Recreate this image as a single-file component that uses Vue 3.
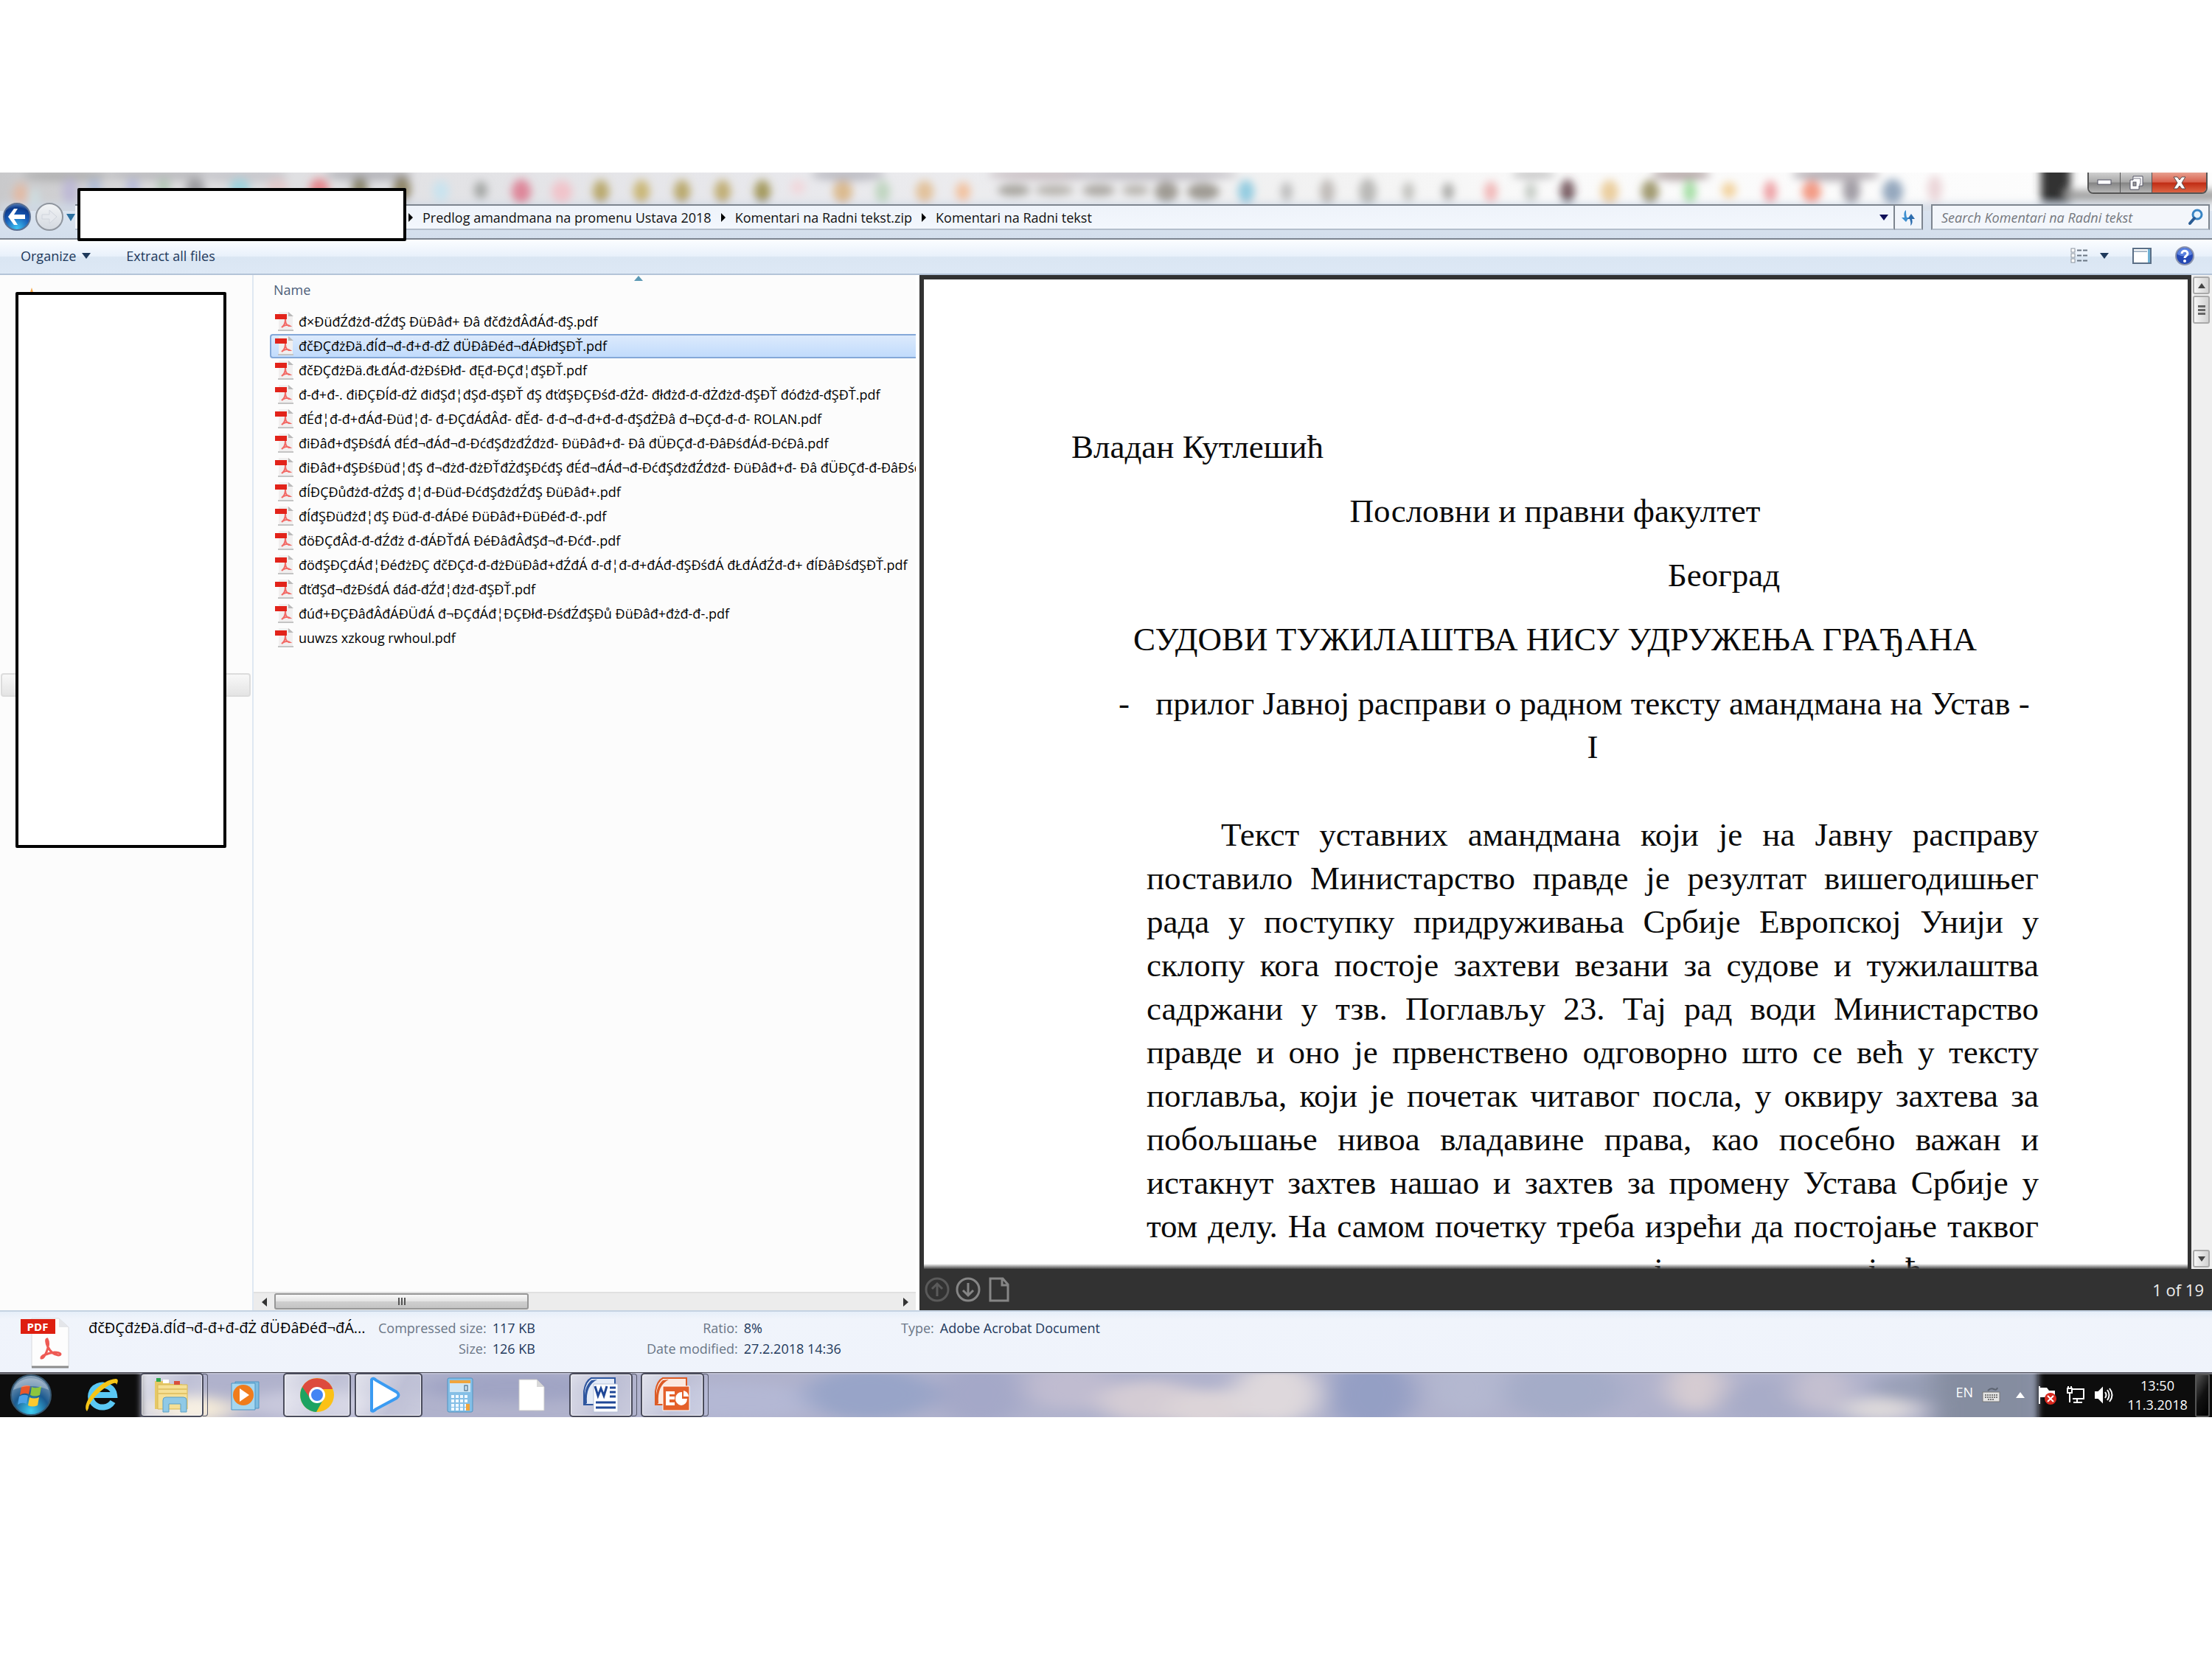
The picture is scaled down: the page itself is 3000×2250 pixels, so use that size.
<script setup>
const crumbs = [
  'Predlog amandmana na promenu Ustava 2018',
  'Komentari na Radni tekst.zip',
  'Komentari na Radni tekst',
]

const files = [
  'đ×ĐüđŹđżđ-đŹđŞ ĐüĐâđ+ Đâ đčđżđÂđÁđ-đŞ.pdf',
  'đčĐÇđżĐä.đÍđ¬đ-đ+đ-đŻ đÜĐâĐéđ¬đÁĐłđŞĐŤ.pdf',
  'đčĐÇđżĐä.đŁđÁđ-đżĐśĐłđ- đĘđ-ĐÇđ¦đŞĐŤ.pdf',
  'đ-đ+đ-. điĐÇĐÍđ-đŻ điđŞđ¦đŞđ-đŞĐŤ đŞ đťđŞĐÇĐśđ-đŻđ- đłđżđ-đ-đŻđżđ-đŞĐŤ đóđżđ-đŞĐŤ.pdf',
  'đÉđ¦đ-đ+đÁđ-Đüđ¦đ- đ-ĐÇđÁđÂđ- đĚđ- đ-đ¬đ-đ+đ-đ-đŞđŻĐâ đ¬ĐÇđ-đ-đ- ROLAN.pdf',
  'điĐâđ+đŞĐśđÁ đÉđ¬đÁđ¬đ-ĐćđŞđżđŹđżđ- ĐüĐâđ+đ- Đâ đÜĐÇđ-đ-ĐâĐśđÁđ-ĐćĐâ.pdf',
  'điĐâđ+đŞĐśĐüđ¦đŞ đ¬đżđ-đżĐŤđŻđŞĐćđŞ đÉđ¬đÁđ¬đ-ĐćđŞđżđŹđżđ- ĐüĐâđ+đ- Đâ đÜĐÇđ-đ-ĐâĐśđÁđ-ĐćĐâ.pdf',
  'đÍĐÇĐůđżđ-đŻđŞ đ¦đ-Đüđ-ĐćđŞđżđŹđŞ ĐüĐâđ+.pdf',
  'đÍđŞĐüđżđ¦đŞ Đüđ-đ-đÁĐé ĐüĐâđ+ĐüĐéđ-đ-.pdf',
  'đöĐÇđÂđ-đ-đŹđż đ-đÁĐŤđÁ ĐéĐâđÂđŞđ¬đ-Đćđ-.pdf',
  'đöđŞĐÇđÁđ¦ĐéđżĐÇ đčĐÇđ-đ-đżĐüĐâđ+đŹđÁ đ-đ¦đ-đ+đÁđ-đŞĐśđÁ đŁđÁđŹđ-đ+ đÍĐâĐśđŞĐŤ.pdf',
  'đťđŞđ¬đżĐśđÁ đáđ-đŹđ¦đżđ-đŞĐŤ.pdf',
  'đúđ+ĐÇĐâđÂđÁĐÜđÁ đ¬ĐÇđÁđ¦ĐÇĐłđ-ĐśđŹđŞĐů ĐüĐâđ+đżđ-đ-.pdf',
  'uuwzs xzkoug rwhoul.pdf',
]
const selected = 1

const docLines = [
  'Текст уставних амандмана који је на Јавну расправу',
  'поставило Министарство правде је резултат вишегодишњег',
  'рада у поступку придруживања Србије Европској Унији у',
  'склопу кога постоје захтеви везани за судове и тужилаштва',
  'садржани у тзв. Поглављу 23. Тај рад води Министарство',
  'правде и оно је првенствено одговорно што се већ у тексту',
  'поглавља, који је почетак читавог посла, у оквиру захтева за',
  'побољшање нивоа владавине права, као посебно важан и',
  'истакнут захтев нашао и захтев за промену Устава Србије у',
  'том делу. На самом почетку треба изрећи да постојање таквог',
]

// Shapes of the window behind, seen through the glass title bar: x, y, rx, ry, colour
const glass = [
  [90, 4, 60, 8, '#aaa'], [230, 3, 90, 8, '#b4b4b8'], [330, 4, 60, 10, '#c4c4c8'], [500, 3, 60, 8, '#a9a9b0'],
  [28, 30, 10, 16, '#e8b79c'], [46, 34, 9, 12, '#cfe0e4'], [95, 26, 11, 18, '#b9b4d6'], [128, 20, 9, 12, '#a8b8d8'],
  [180, 20, 9, 12, '#b0b4da'], [222, 20, 9, 12, '#a9c2ae'], [265, 22, 13, 14, '#8c8c90'], [325, 20, 14, 12, '#8fd0dc'],
  [376, 20, 14, 12, '#e4c6c6'], [433, 22, 13, 14, '#e87078'], [488, 20, 11, 14, '#77704f'], [545, 22, 12, 18, '#7c704a'],
  [598, 25, 11, 14, '#c4e4f2'], [652, 24, 9, 12, '#949894'], [707, 26, 13, 17, '#dd7088'], [762, 26, 14, 15, '#f4bcc4'],
  [815, 26, 11, 16, '#b09a50'], [870, 26, 11, 16, '#c4ac5c'], [925, 26, 11, 16, '#b09a50'], [980, 26, 11, 16, '#b8a058'],
  [1034, 26, 11, 16, '#94883c'], [1082, 20, 10, 10, '#f4d4d8'], [1143, 26, 13, 16, '#d8b078'], [1197, 26, 10, 15, '#b4d0b4'],
  [1254, 26, 12, 15, '#e0b888'], [1306, 26, 10, 13, '#f4b88c'], [1150, 3, 50, 9, '#b4b4bc'], [1420, 3, 80, 8, '#c4b8bc'],
  [1560, 3, 120, 8, '#b8b4bc'], [1690, 26, 11, 16, '#7cc4dc'], [1745, 26, 8, 13, '#b0b0b0'], [1800, 26, 10, 17, '#b4b0ac'],
  [1855, 26, 12, 18, '#acaaa8'], [1910, 26, 8, 13, '#b4b4b0'], [1964, 26, 8, 12, '#989894'], [2022, 26, 9, 14, '#f0a8a8'],
  [2076, 26, 8, 12, '#b8c0b8'], [2126, 26, 10, 17, '#5c3840'], [2183, 26, 12, 16, '#e8c488'], [2238, 26, 12, 16, '#8c8450'],
  [2292, 26, 9, 15, '#90d890'], [2345, 24, 10, 11, '#f0c888'], [2401, 26, 9, 15, '#ec8c90'], [2457, 26, 13, 15, '#f08468'],
  [2511, 24, 12, 18, '#8c8890'], [2567, 26, 14, 17, '#7c94b0'], [2624, 22, 10, 18, '#e8ccd0'], [2280, 3, 40, 8, '#a89898'],
  [2490, 3, 60, 9, '#a8a0a8'], [2080, 3, 30, 6, '#b8b8b8'],
  [1375, 24, 22, 8, '#98948c'], [1430, 24, 26, 7, '#a8a49c'], [1490, 24, 22, 8, '#9c9890'], [1540, 24, 18, 7, '#a8a49c'],
  [1582, 26, 16, 14, '#8c887e'], [1632, 26, 22, 12, '#8c887e'],
]

// Wallpaper clouds behind the taskbar glass
const clouds = [
  [260, 50, 60, 18, '#f4ead8'], [420, 44, 90, 20, '#c8c8dc'], [700, 20, 130, 20, '#a0a4c4'], [1000, 40, 120, 24, '#b4b8d4'],
  [1180, 30, 90, 34, '#98a4c8'], [1330, 30, 60, 40, '#a4a8c8'], [1450, 20, 60, 30, '#c0bcd0'], [1560, 40, 70, 28, '#d4ccd4'],
  [1640, 50, 60, 26, '#dcd4d8'], [1730, 30, 60, 40, '#ded8dc'], [1860, 30, 60, 46, '#949fc4'], [1990, 20, 50, 40, '#b4b8d0'],
  [2120, 26, 80, 38, '#a4acc8'], [2300, 20, 40, 34, '#d6ccd2'], [2400, 40, 70, 30, '#a8acc8'], [2470, 24, 40, 30, '#c4c0d0'],
  [2550, 50, 50, 16, '#dcd8da'], [2600, 20, 60, 20, '#9aa0b8'],
]
</script>

<template>
  <div class="screen">
    <header class="chrome">
      <div class="titlebar">
        <svg class="glass" viewBox="0 0 3000 52" preserveAspectRatio="none" aria-hidden="true">
          <defs>
            <filter id="soft" x="-50%" y="-50%" width="200%" height="200%"><feGaussianBlur stdDeviation="6" /></filter>
            <linearGradient id="glassBase" x1="0" x2="1" y1="0" y2="0">
              <stop offset="0" stop-color="#c9c9cb" /><stop offset=".08" stop-color="#dedee0" />
              <stop offset=".35" stop-color="#e8e8ec" /><stop offset=".6" stop-color="#f2f2f2" />
              <stop offset=".7" stop-color="#fafafa" /><stop offset="1" stop-color="#fdfdfd" />
            </linearGradient>
          </defs>
          <rect width="3000" height="52" fill="url(#glassBase)" />
          <g filter="url(#soft)">
            <g opacity=".8"><ellipse v-for="(b, i) in glass" :key="i" :cx="b[0]" :cy="b[1]" :rx="b[2]" :ry="b[3]" :fill="b[4]" /></g>
            <rect x="2768" y="-20" width="40" height="62" fill="#333" />
            <rect x="2800" y="24" width="220" height="14" fill="#999" />
            <rect x="0" y="42" width="3000" height="14" fill="#cfd8e4" />
          </g>
        </svg>
        <div class="winbtns">
          <button class="wb" aria-label="Minimize"><svg width="20" height="10"><rect x="1" y="1" width="18" height="6" fill="#fff" stroke="#556" /></svg></button>
          <button class="wb" aria-label="Restore"><svg width="20" height="20"><path d="M6 1h13v13h-5v5H2V6h4z" fill="#fff" stroke="#556" /><rect x="6" y="9" width="4" height="5" fill="#999" stroke="#556" /><path d="M7 4h9v8h-2" fill="none" stroke="#778" /></svg></button>
          <button class="wb close" aria-label="Close"><svg width="20" height="18"><path d="M2 1h5l3 4 3-4h5l-5 8 5 8h-5l-3-4-3 4H2l5-8z" fill="#fff" stroke="#5a4a4a" /></svg></button>
        </div>
      </div>
      <div class="navbar">
        <button class="round back" aria-label="Back"><svg width="26" height="26"><path d="M14 2l-5 8h15v6H9l5 8h-5L1 13 9 2z" fill="#fff" /></svg></button>
        <button class="round fwd" aria-label="Forward"><svg width="24" height="24"><path d="M12 3v6H2v6h10v6l10-9z" fill="#e6e9ee" stroke="#cfd4dc" /></svg></button>
        <svg width="12" height="10" class="recent"><path d="M0 0h12L6 10z" fill="#2b6f9f" /></svg>
        <nav class="address" aria-label="Address">
          <template v-for="c in crumbs" :key="c">
            <svg width="8" height="12"><path d="M1 0l6 6-6 6z" fill="#000" /></svg>
            <a href="#">{{ c }}</a>
          </template>
          <svg class="dropdown" width="12" height="8"><path d="M0 0h12L6 8z" fill="#10105a" /></svg>
        </nav>
        <button class="refresh" aria-label="Refresh"><svg width="24" height="24"><path d="M9 2C6 4 6 8 7 12H3l6 6 4-6h-3C9 8 9 5 9 2z" fill="#3d8fd0" /><path d="M15 23c3-2 3-6 2-9h4l-5-7-5 7h3c1 3 2 6 1 9z" fill="#2c6cae" /></svg></button>
        <label class="search">
          <input type="search" placeholder="Search Komentari na Radni tekst" aria-label="Search Komentari na Radni tekst" />
          <svg width="22" height="24"><circle cx="13" cy="8" r="6" fill="#e8f4fc" stroke="#3784c4" stroke-width="3" /><path d="M9 13L3 20" stroke="#2a5c94" stroke-width="4" stroke-linecap="round" /></svg>
        </label>
        <div class="mask mask-top"></div>
      </div>
    </header>

    <div class="toolbar">
      <button>Organize <svg width="12" height="8"><path d="M0 0h12L6 8z" fill="#1e395b" /></svg></button>
      <button>Extract all files</button>
      <div class="tools">
        <button aria-label="Change view"><svg width="24" height="24"><g fill="#fff" stroke="#8a929c"><rect x="1" y="2" width="5" height="5" /><rect x="1" y="9" width="5" height="5" /><rect x="1" y="16" width="5" height="5" /></g><path d="M9 4.500h6M17 4.500h6M9 11.500h6M17 11.500h6M9 18.500h6M17 18.500h6" stroke="#6b7683" stroke-width="2" /></svg></button>
        <button aria-label="View options" class="opt"><svg width="12" height="8"><path d="M0 0h12L6 8z" fill="#1e395b" /></svg></button>
        <button aria-label="Preview pane" class="pane"><svg width="26" height="22"><rect x="1" y="1" width="24" height="20" fill="#fff" stroke="#5b6f86" stroke-width="2" /><path d="M2 5h18" stroke="#a9b9c9" stroke-width="2" /><rect x="21" y="2" width="3" height="18" fill="#6fb1d4" /></svg></button>
        <button aria-label="Help"><svg width="26" height="26"><circle cx="13" cy="13" r="12" fill="#2448b4" stroke="#8a93ac" stroke-width="2" /><path d="M3 11a10 9 0 0 1 20 0q-10 5-20 0z" fill="#5b82e0" /><path d="M9 10c0-5 8-5 8 0 0 3-4 3-4 6" fill="none" stroke="#fff" stroke-width="3" /><circle cx="13" cy="20" r="2" fill="#fff" /></svg></button>
      </div>
    </div>

    <main class="body">
      <aside class="tree">
        <svg class="star" width="10" height="16"><path d="M5 0l5 16H0z" fill="#f7a94a" /></svg>
        <div class="tree-row"></div>
        <div class="mask mask-side"></div>
      </aside>

      <section class="list">
        <svg class="sort" width="12" height="7"><path d="M6 0l6 7H0z" fill="#5d9ab5" /></svg>
        <table>
          <thead><tr><th>Name</th></tr></thead>
          <tbody>
            <tr v-for="(f, i) in files" :key="f" :class="{ sel: i === selected }">
              <td>
                <div class="cell">
                  <svg width="26" height="26" aria-hidden="true"><path d="M5 0h13l6 6v18H5z" fill="#f1efef" /><path d="M18 0l7 6h-7z" fill="#b9b9b9" /><path d="M4 25h21" stroke="#c4c4c4" stroke-width="2" /><path d="M0 3h16v7H0z" fill="#e2231a" /><path d="M14 10c0 5-2 9-5 11 3-3 8-4 11-2-4 0-6-4-6-9z" fill="none" stroke="#f26a66" stroke-width="2" /></svg>
                  <span>{{ f }}</span>
                </div>
              </td>
            </tr>
          </tbody>
        </table>
        <div class="hscroll">
          <button aria-label="Scroll left"><svg width="7" height="12"><path d="M7 0v12L0 6z" fill="#333" /></svg></button>
          <div class="htrack"><div class="hthumb"><i></i><i></i><i></i></div></div>
          <button aria-label="Scroll right"><svg width="7" height="12"><path d="M0 0v12l7-6z" fill="#333" /></svg></button>
        </div>
      </section>

      <section class="preview">
        <div class="view">
          <article class="page">
            <p class="author">Владан Кутлешић</p>
            <p class="center">Пословни и правни факултет</p>
            <p class="city">Београд</p>
            <p class="center">СУДОВИ ТУЖИЛАШТВА НИСУ УДРУЖЕЊА ГРАЂАНА</p>
            <div class="inset">
              <p class="sub"><span class="dash">-</span>прилог Јавној расправи о радном тексту амандмана на Устав -</p>
              <p class="num">I</p>
              <p class="para">
                <span v-for="l in docLines" :key="l">{{ l }}</span>
                <span class="cut"><b>ј</b><b>ј</b><b>ђ</b></span>
              </p>
            </div>
          </article>
          <div class="vscroll">
            <button aria-label="Scroll up"><svg width="10" height="7"><path d="M5 0l5 7H0z" fill="#444" /></svg></button>
            <div class="vthumb"><i></i><i></i><i></i></div>
            <button class="down" aria-label="Scroll down"><svg width="10" height="7"><path d="M0 0h10L5 7z" fill="#444" /></svg></button>
          </div>
        </div>
        <footer class="pager">
          <button aria-label="Previous page"><svg width="34" height="34" fill="none" stroke="#5a5a5a" stroke-width="3"><circle cx="17" cy="17" r="15" /><path d="M17 26V9M10 16l7-7 7 7" /></svg></button>
          <button aria-label="Next page"><svg width="34" height="34" fill="none" stroke="#868686" stroke-width="3"><circle cx="17" cy="17" r="15" /><path d="M17 8v17M10 18l7 7 7-7" /></svg></button>
          <button aria-label="Page view"><svg width="34" height="34" fill="none" stroke="#868686" stroke-width="3"><path d="M5 2h17l7 8v22H5zM21 2v9h8" /></svg></button>
          <span>1 of 19</span>
        </footer>
      </section>
    </main>

    <section class="details">
      <svg width="66" height="70" viewBox="0 0 66 70" aria-hidden="true">
        <path d="M15 1h37l13 12v54H15z" fill="#fdfdfd" stroke="#d8dade" /><path d="M52 1v12h13z" fill="#e4e6ea" /><path d="M15 67h50" stroke="#8c8c8c" stroke-width="3" />
        <rect y="2" width="47" height="20" fill="#de1f10" />
        <text x="23" y="18" text-anchor="middle" font-family="Open Sans, sans-serif" font-size="15" font-weight="700" fill="#fff">PDF</text>
        <path d="M36 29c-4 0 1 20 15 22 5 0 4-4-5-4-9 1-19 5-18 8 4 1 13-17 8-26z" fill="none" stroke="#ee5a54" stroke-width="3" />
      </svg>
      <strong>đčĐÇđżĐä.đÍđ¬đ-đ+đ-đŻ đÜĐâĐéđ¬đÁ...</strong>
      <dl class="d1"><dt>Compressed size:</dt><dd>117 KB</dd><dt>Size:</dt><dd>126 KB</dd></dl>
      <dl class="d2"><dt>Ratio:</dt><dd>8%</dd><dt>Date modified:</dt><dd>27.2.2018 14:36</dd></dl>
      <dl class="d3"><dt>Type:</dt><dd>Adobe Acrobat Document</dd></dl>
    </section>

    <footer class="taskbar">
      <svg class="wall" viewBox="0 0 3000 61" preserveAspectRatio="none" aria-hidden="true">
        <defs><filter id="cloud" x="-50%" y="-100%" width="200%" height="300%"><feGaussianBlur stdDeviation="18 8" /></filter>
          <filter id="edge" x="-10%" y="-10%" width="120%" height="120%"><feGaussianBlur stdDeviation="4 0" /></filter></defs>
        <rect width="3000" height="61" fill="#b0b2cc" />
        <g filter="url(#cloud)">
          <ellipse v-for="(b, i) in clouds" :key="i" :cx="b[0]" :cy="b[1]" :rx="b[2]" :ry="b[3]" :fill="b[4]" />
          <rect x="2620" y="-20" width="160" height="110" fill="#858da0" />
        </g>
        <g filter="url(#edge)"><rect x="-20" y="-9" width="212" height="80" fill="#0b0b0b" /><rect x="2764" y="-9" width="260" height="80" fill="#090909" /></g>
        <path d="M0 2h3000" stroke="#c9cad6" stroke-width="1" /><path d="M0 0h3000" stroke="#50505a" stroke-width="2" />
      </svg>
      <button class="task start" aria-label="Start">
        <svg width="60" height="58" viewBox="0 0 60 58"><defs><radialGradient id="orb" cx=".5" cy=".9" r=".9"><stop offset="0" stop-color="#3fd0f4" /><stop offset=".5" stop-color="#1b5a90" /><stop offset="1" stop-color="#8fa4b8" /></radialGradient></defs>
          <circle cx="30" cy="29" r="27" fill="url(#orb)" stroke="#36566f" stroke-width="2" />
          <path d="M17 18q6-4 12-1l-2 11q-6-3-12 1z" fill="#e8562a" /><path d="M31 18q6 3 13-1l-2 12q-7 3-13 0z" fill="#8cc63e" /><path d="M14 31q6-4 12-1l-2 11q-6-3-12 1z" fill="#4aa0e6" /><path d="M28 32q6 3 13 0l-2 11q-7 3-13 0z" fill="#fcc92f" />
          <path d="M6 22a25 22 0 0 1 48 0q-24-10-48 0z" fill="#fff" opacity=".3" /></svg>
      </button>
      <button class="task ie" aria-label="Internet Explorer">
        <svg width="50" height="50" viewBox="0 0 50 50"><path d="M40 34a16 15 0 1 1 2-9H14" fill="none" stroke="#5ac8f4" stroke-width="8" /><path d="M5 47C-4 38 22 4 44 3c3 0 4 3 1 8 0-10-36 16-38 32z" fill="#f5c518" /></svg>
      </button>
      <button class="task box stack" aria-label="Windows Explorer">
        <svg width="54" height="50" viewBox="0 0 54 50"><path d="M4 6h18l3 4h16v34H4z" fill="#e6c866" /><path d="M8 11h40v33H8z" fill="#f5e096" stroke="#d8b850" /><path d="M8 17h40M8 23h40" stroke="#e2c468" stroke-width="2" /><path d="M6 2h6v5H6z" fill="#2fa84f" /><path d="M15 4h8v5h-8z" fill="#fff" /><path d="M30 6h8v5h-8z" fill="#d9503c" /><path d="M15 48V32q0-4 4-4h24q4 0 4 4v16h-8V37H23v11z" fill="#8fc9e6" stroke="#5d9fc4" /></svg>
      </button>
      <button class="task" aria-label="Media Player">
        <svg width="44" height="44" viewBox="0 0 44 44"><path d="M8 4h32v36H8z" fill="#7fbde0" stroke="#4c94c4" /><path d="M3 6h32v36H3z" fill="#a5d6ef" stroke="#4c94c4" /><circle cx="19" cy="22" r="14" fill="#f07c1c" /><path d="M14 13l13 9-13 9z" fill="#fff" /></svg>
      </button>
      <button class="task box" aria-label="Chrome">
        <svg width="48" height="48" viewBox="0 0 48 48"><circle cx="24" cy="24" r="23" fill="#fbc116" /><path d="M4 13a23 23 0 0 1 40 0l1 3H24l-10 14z" fill="#dd4b3e" /><path d="M4 13a23 23 0 0 0 19 34l10-18-9 4-9-4z" fill="#1da362" /><circle cx="24" cy="24" r="11" fill="#fff" /><circle cx="24" cy="24" r="8" fill="#4285f4" /></svg>
      </button>
      <button class="task box play" aria-label="Player">
        <svg width="44" height="50" viewBox="0 0 44 50"><path d="M4 4v42q2 2 6-2l28-15q5-4 0-8L10 5Q6 1 4 4z" fill="#fff" stroke="#3a9bf2" stroke-width="4" /></svg>
      </button>
      <button class="task" aria-label="Calculator">
        <svg width="36" height="48" viewBox="0 0 36 48"><rect x="1" y="1" width="34" height="46" rx="2" fill="#85bfe6" stroke="#4f93c2" /><rect x="4" y="4" width="28" height="16" fill="#cfe6f5" /><path d="M4 4h28v4H4z" fill="#f0a53c" /><path d="M6 26h24M6 32h24M6 38h24M6 43h24" stroke="#eff8ff" stroke-width="4" stroke-dasharray="4 2" /><rect x="26" y="36" width="5" height="9" fill="#f0a53c" /><rect x="24" y="11" width="4" height="7" fill="none" stroke="#355a78" /></svg>
      </button>
      <button class="task" aria-label="Document">
        <svg width="36" height="44" viewBox="0 0 36 44"><path d="M1 1h24l10 10v32H1z" fill="#fff" stroke="#c8c8c8" /><path d="M25 1v10h10z" fill="#d8d8d8" /></svg>
      </button>
      <button class="task box stack" aria-label="Word">
        <svg width="50" height="50" viewBox="0 0 50 50"><path d="M12 2h32v36H2V20Q4 6 12 2z" fill="#e4ebf7" stroke="#2e569f" stroke-width="2" /><path d="M6 36Q4 12 20 4l-8 1Q1 14 3 38z" fill="#2e569f" /><path d="M15 10h33v38H15z" fill="#fff" stroke="#b4c0d8" /><path d="M17 13l4 13 4-10 4 10 4-13" fill="none" stroke="#1f4797" stroke-width="3" /><path d="M37 15h8M37 21h8M37 27h8M18 35h27M18 42h27" stroke="#1f4797" stroke-width="3" /></svg>
      </button>
      <button class="task box stack" aria-label="PowerPoint">
        <svg width="50" height="50" viewBox="0 0 50 50"><path d="M12 2h32v36H2V20Q4 6 12 2z" fill="#fbe9e0" stroke="#dc5b26" stroke-width="2" /><path d="M6 36Q4 12 20 4l-8 1Q1 14 3 38z" fill="#dc5b26" /><path d="M12 13h36v33H12z" fill="#e4602a" stroke="#fff" /><path d="M16 20h12v4h-7v3h7v4h-7v4h7v4H16z" fill="#fff" /><path d="M38 21a8 9 0 1 0 7 9h-7z" fill="#fff" /><path d="M40 19v8h7q-1-7-7-8z" fill="#fff" /></svg>
      </button>
      <div class="tray">
        <button class="lang">EN</button>
        <svg width="26" height="22"><path d="M8 5q4-4 8-2t5-2" fill="none" stroke="#5c6370" stroke-width="2" /><rect x="1" y="7" width="23" height="13" fill="#e4e4e4" stroke="#777" /><path d="M4 11h18M4 14h18M8 17h9" stroke="#777" stroke-width="2" stroke-dasharray="2 1" /></svg>
        <svg class="up" width="12" height="8"><path d="M6 0l6 8H0z" fill="#fff" /></svg>
        <svg width="26" height="26"><path d="M2 1v24" stroke="#fff" stroke-width="2" /><path d="M3 3h9l3 4h8v9H3z" fill="#fff" /><circle cx="17" cy="18" r="8" fill="#d8281e" /><path d="M13 14l8 8M21 14l-8 8" stroke="#fff" stroke-width="2" /></svg>
        <svg width="26" height="26" fill="none" stroke="#fff" stroke-width="2"><path d="M9 5h15v13H9M15 18v4M10 23h12M5 10v13M2 4h6v6H2zM3 1v3M7 1v3" /></svg>
        <svg width="26" height="26" fill="none" stroke="#fff" stroke-width="2"><path d="M2 9h4l5-5v18l-5-5H2z" fill="#fff" /><path d="M15 9q3 4 0 8M18 6q5 7 0 14M21 4q7 9 0 18" /></svg>
        <time><span>13:50</span><span>11.3.2018</span></time>
        <button class="desk" aria-label="Show desktop"></button>
      </div>
    </footer>
  </div>
</template>

<style>
body { margin: 0; background: #fff; }
</style>

<style scoped>
* { box-sizing: border-box; }
button { border: 0; padding: 0; background: none; font: inherit; color: inherit; display: flex; align-items: center; justify-content: center; }
svg { display: block; flex: none; }
.screen { height: 100vh; padding: 234px 0 328px; display: flex; flex-direction: column; font: 18px/28px "Open Sans", "Noto Sans", sans-serif; color: #000; }

.chrome { position: relative; background: linear-gradient(#e4ebf4, #d3deec); border-bottom: 2px solid #7c8490; }
.titlebar { height: 43px; display: flex; justify-content: flex-end; padding-right: 6px; position: relative; }
.glass { position: absolute; inset: 0; width: 100%; height: 52px; }
.winbtns { position: relative; display: flex; height: 29px; border: 2px solid #555; border-top: 0; border-radius: 0 0 8px 8px; overflow: hidden; }
.wb { width: 43px; background: linear-gradient(#d0d0d0, #a8a8a8 48%, #858585 52%, #b4b4b4); border-right: 1px solid #555; }
.wb.close { width: 73px; border-right: 0; background: linear-gradient(#e8a090, #d8604c 48%, #c02c14 52%, #dc6444); }

.navbar { position: relative; height: 46px; display: flex; align-items: flex-start; padding: 0 3px; }
.round { width: 38px; height: 38px; border-radius: 50%; margin: -2px 0 0 1px; flex: none; }
.back { background: radial-gradient(circle at 50% 95%, #3ec4f4, #1658b4 50%, #0c3a8c 75%, #7ca4d4); border: 2px solid #5a6f92; }
.fwd { margin-left: 6px; background: linear-gradient(#f2f4f6, #d4d9e0); border: 2px solid #8f959e; }
.recent { margin: 13px 0 0 4px; }
.address { flex: 1; height: 35px; display: flex; align-items: center; gap: 12px; padding: 0 7px 0 451px; background: linear-gradient(#eef3fa, #f3f7fd); border: 2px solid #7d858f; border-bottom-color: #b4bfcc; border-left: 0; color: #111; white-space: nowrap; }
.address a { color: inherit; text-decoration: none; }
.dropdown { margin-left: auto; }
.refresh { width: 38px; height: 35px; background: #f1f5fb; border: 2px solid #7d858f; border-bottom-color: #b4bfcc; border-left: 0; }
.search { width: 378px; height: 35px; margin-left: 11px; display: flex; align-items: center; padding: 0 6px 0 12px; background: #f3f6fb; border: 2px solid #7d858f; border-bottom-color: #b4bfcc; }
.search input { flex: 1; min-width: 0; border: 0; padding: 0; background: none; font: italic 18px/28px "Open Sans", sans-serif; outline: 0; }
.search input::placeholder { color: #73777d; opacity: 1; }
.mask { position: absolute; background: #fff; border: 4px solid #000; border-radius: 2px; }
.mask-top { left: 105px; top: -22px; width: 446px; height: 72px; z-index: 2; }

.toolbar { height: 48px; flex: none; display: flex; align-items: center; gap: 48px; padding: 0 24px 2px 28px; color: #1e395b; background: linear-gradient(#fbfdff, #e9f1fb 48%, #dae6f3 52%, #dde8f5); border-bottom: 2px solid #b4c4d8; }
.toolbar button { gap: 8px; }
.tools { margin-left: auto; display: flex; align-items: center; gap: 16px; }
.tools .pane { margin-left: 16px; }
.tools button:last-child { margin-left: 16px; }

.body { flex: 1; min-height: 0; display: flex; }
.tree { position: relative; width: 344px; flex: none; background: #fcfcfc; border-right: 2px solid #dfe8f2; }
.star { position: absolute; left: 38px; top: 17px; }
.tree-row { position: absolute; left: 1px; right: 2px; top: 540px; height: 32px; border: 2px solid #dcdcdc; border-radius: 4px; background: linear-gradient(#f8f8f8, #e4e4e4); }
.mask-side { left: 21px; top: 23px; width: 286px; height: 754px; }

.list { position: relative; width: 898px; flex: none; display: flex; flex-direction: column; background: #fcfcfc; overflow: hidden; }
.sort { position: absolute; left: 516px; top: 1px; }
table { border-collapse: collapse; table-layout: fixed; width: 100%; }
th { height: 47px; padding: 0 0 8px 27px; text-align: left; font-weight: 400; color: #4c607a; }
td { padding: 0 0 0 22px; height: 33px; }
.cell { display: flex; align-items: center; gap: 6px; height: 33px; padding: 0 0 2px 5px; border: 2px solid transparent; border-right: 0; overflow: hidden; white-space: nowrap; }
.sel .cell { background: linear-gradient(#dceafc, #c1dbfc); border-color: #84a8d8; border-radius: 4px 0 0 4px; }
.hscroll { margin-top: auto; height: 25px; display: flex; align-items: center; background: #ececec; border-top: 2px solid #e0e0e0; }
.hscroll button { width: 28px; }
.htrack { flex: 1; height: 23px; }
.hthumb { width: 41%; height: 22px; display: flex; gap: 2px; align-items: center; justify-content: center; border: 2px solid #979797; border-radius: 3px; background: linear-gradient(#f8f8f8, #e4e4e4 48%, #cfcfcf 52%, #c4c4c4); }
.hthumb i { width: 2px; height: 10px; background: #555; }

.preview { flex: 1; min-width: 0; margin-left: 5px; display: flex; flex-direction: column; background: #323232; }
.view { flex: 1; min-height: 0; display: flex; padding: 6px 0 0 6px; }
.page { position: relative; flex: 1; min-width: 0; overflow: hidden; background: #fff; padding: 198px 202px 0 200px; font: 45px/59px "Liberation Serif", serif; color: #0a0a0a; white-space: nowrap; }
.page::after { content: ""; position: absolute; inset: auto 0 0; height: 7px; background: linear-gradient(transparent, #444); }
.page p { margin: 0; }
.page p.author, .page p.center, .page p.city { margin-bottom: 28px; }
.center { text-align: center; }
.city { padding-left: 809px; }
.inset { padding-left: 102px; }
.sub, .num { text-align: center; }
.sub { position: relative; }
.dash { position: absolute; left: -38px; }
.page p.para { margin-top: 60px; }
.para span { display: block; text-align: justify; text-align-last: justify; }
.para span:first-child { padding-left: 101px; }
.para .cut { display: flex; gap: 278px; padding-left: 688px; }
.cut b { font-weight: 400; }
.cut b:last-child { margin-left: -240px; }
.vscroll { width: 28px; margin: -6px 0 0 5px; display: flex; flex-direction: column; gap: 2px; padding: 2px 3px 2px 2px; background: #efefef; }
.vscroll button, .vthumb { height: 24px; border: 2px solid #a9a9a9; border-radius: 3px; background: linear-gradient(90deg, #f6f6f6, #d2d2d2); }
.vscroll .down { margin-top: auto; }
.vthumb { height: 38px; display: flex; flex-direction: column; gap: 2px; align-items: center; justify-content: center; }
.vthumb i { width: 10px; height: 3px; background: #666; }
.pager { height: 56px; flex: none; display: flex; align-items: center; gap: 8px; padding: 0 11px 0 7px; color: #eee; }
.pager span { margin-left: auto; font-size: 22px; }

.details { height: 84px; flex: none; display: flex; align-items: flex-start; padding: 8px 28px; background: linear-gradient(#e6eff9, #f0f4fb 12%, #eff3fb); border-top: 2px solid #c4d2e2; }
.details strong { width: 393px; margin-left: 26px; font-weight: 400; font-size: 20px; white-space: nowrap; }
.details dl { margin: 0; display: grid; grid-template-columns: auto auto; column-gap: 8px; white-space: nowrap; justify-content: start; }
.details dt { text-align: right; color: #6a7686; }
.details dd { margin: 0; color: #1e395b; }
.details .d1 { width: 364px; }
.details .d2 { width: 345px; }

.taskbar { position: relative; height: 61px; flex: none; display: flex; align-items: stretch; background: #b0b2cc; padding-left: 4px; }
.wall { position: absolute; inset: 0; width: 100%; height: 100%; }
.task { position: relative; width: 92px; margin: 1px 5px 0 0; flex: none; }
.task.start { width: 75px; margin: 0; }
.task.ie { width: 107px; margin: 0 4px 0 0; padding-left: 10px; }
.play { padding-right: 10px; }
.box { border: 2px solid #4a4c5c; border-radius: 5px; background: linear-gradient(120deg, #ffffffa0, #ffffff30 60%, #ffffff50); box-shadow: inset 0 0 0 1px #ffffffa0; }
.stack { width: 86px; margin-right: 11px; }
.stack::after { content: ""; position: absolute; right: -8px; top: -1px; bottom: -1px; width: 6px; border: 1px solid #55586a; border-left: 0; border-radius: 0 4px 4px 0; }
.tray { position: relative; margin-left: auto; display: flex; align-items: center; gap: 12px; color: #fff; }
.lang { font-size: 18px; padding-bottom: 8px; }
.up { margin: 0 6px 0 8px; }
time { width: 96px; display: flex; flex-direction: column; align-items: center; line-height: 26px; font-size: 18px; }
.desk { width: 20px; height: 59px; margin: 1px 3px 0 -9px; border: 2px solid #555; border-radius: 3px; background: linear-gradient(120deg, #555, #111 50%, #000); }
</style>
